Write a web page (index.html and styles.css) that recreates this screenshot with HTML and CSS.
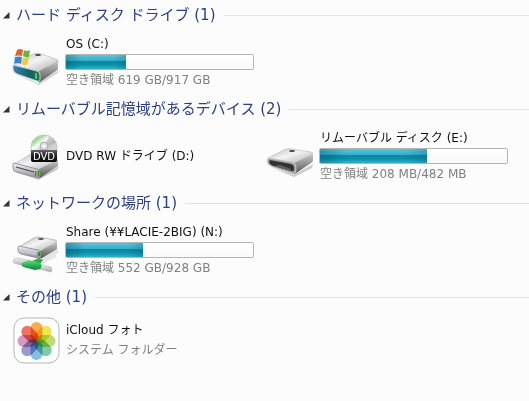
FILE: index.html
```html
<!DOCTYPE html>
<html lang="ja">
<head>
<meta charset="utf-8">
<title>コンピューター</title>
<link rel="stylesheet" href="styles.css">
</head>
<body>
<svg class="defs" width="0" height="0" aria-hidden="true">
  <defs>
    <linearGradient id="top" x1="0" y1="0" x2="1" y2="1">
      <stop offset="0" stop-color="#b9b9b9"/><stop offset=".45" stop-color="#f4f4f4"/><stop offset="1" stop-color="#aaa"/>
    </linearGradient>
    <linearGradient id="side" x1="0" y1="0" x2="0" y2="1">
      <stop offset="0" stop-color="#c9c9c9"/><stop offset="1" stop-color="#555"/>
    </linearGradient>
    <linearGradient id="front" x1="0" y1="0" x2="0" y2="1">
      <stop offset="0" stop-color="#f4f4f8"/><stop offset="1" stop-color="#8d8d95"/>
    </linearGradient>
    <linearGradient id="teal" x1="0" y1="0" x2="1" y2="0">
      <stop offset="0" stop-color="#3583b5"/><stop offset=".6" stop-color="#176168"/><stop offset="1" stop-color="#1a7950"/>
    </linearGradient>
    <linearGradient id="disc" x1="0" y1="0" x2="1" y2="1">
      <stop offset="0" stop-color="#c5c5c5"/><stop offset=".25" stop-color="#a7d8a0"/><stop offset=".42" stop-color="#fff"/><stop offset=".6" stop-color="#c9c9c9"/><stop offset="1" stop-color="#e7d9df"/>
    </linearGradient>
    <linearGradient id="label" x1="0" y1="0" x2="0" y2="1">
      <stop offset="0" stop-color="#666"/><stop offset=".45" stop-color="#222"/><stop offset="1" stop-color="#050505"/>
    </linearGradient>
    <linearGradient id="pipe" x1="0" y1="0" x2="0" y2="1">
      <stop offset="0" stop-color="#f4f6f6"/><stop offset="1" stop-color="#a2abaa"/>
    </linearGradient>
    <linearGradient id="green" x1="0" y1="0" x2="0" y2="1">
      <stop offset="0" stop-color="#63df82"/><stop offset="1" stop-color="#07862f"/>
    </linearGradient>
  </defs>
</svg>
<main>
  <section class="group">
    <h2><button type="button" aria-expanded="true"><svg class="arrow" viewBox="0 0 7 7"><path d="M6.5 0V6.5H0Z"/></svg>ハード ディスク ドライブ (1)</button></h2>
    <ul>
      <li>
        <svg class="icon" viewBox="0 0 48 48" aria-hidden="true">
          <path d="M3 36 26 45 47 32 46 35 27 47Z" fill="#aaa" opacity=".5"/>
          <path d="M2 27 19 17Q22 15 26 15L44 21Q47 22 46 25L27 34Z" fill="url(#top)" stroke="#aaa" stroke-width=".5"/>
          <path d="M27 33 46 23V30Q46 32 44 33L28 44Q26 45 26 42Z" fill="url(#side)"/>
          <path d="M1 27 25 33Q28 34 28 37V42Q28 44 25 43L5 36Q1 34 1 31Z" fill="url(#teal)" stroke="#c6d2d5"/>
          <path d="M24 35v6" stroke="#65e06c" stroke-width="1.5"/>
          <ellipse cx="26" cy="17" rx="3" ry="1" fill="#444"/>
          <path d="M5 12Q8 10 11 12L10 18Q7 17 3 18Z" fill="#da6538"/>
          <path d="M12 12Q15 14 18 12L17 19Q14 20 11 18Z" fill="#6fb03f"/>
          <path d="M3 19Q7 18 10 19L9 26Q6 24 2 26Z" fill="#3d84c5"/>
          <path d="M11 19Q14 21 17 20L15 27Q12 28 10 26Z" fill="#eccb48"/>
        </svg>
        <div class="info">
          <span class="name">OS (C:)</span>
          <progress max="100" value="32" aria-label="OS (C:) 使用量"></progress>
          <span class="detail">空き領域 619 GB/917 GB</span>
        </div>
      </li>
    </ul>
  </section>

  <section class="group">
    <h2><button type="button" aria-expanded="true"><svg class="arrow" viewBox="0 0 7 7"><path d="M6.5 0V6.5H0Z"/></svg>リムーバブル記憶域があるデバイス (2)</button></h2>
    <ul>
      <li>
        <svg class="icon" viewBox="0 0 48 48" aria-hidden="true">
          <path d="M4 40 25 47 47 34 45 38 26 48Z" fill="#999" opacity=".5"/>
          <path d="M2 32 19 22 46 28 27 38Z" fill="url(#top)" stroke="#aaa" stroke-width=".5"/>
          <path d="M27 37 46 28V34L28 46Q26 46 26 44Z" fill="url(#side)"/>
          <path d="M2 31 25 37Q28 38 28 41V44Q28 47 25 46L4 40Q1 39 1 36V33Q1 31 2 31Z" fill="url(#front)" stroke="#777" stroke-width=".7"/>
          <path d="M4 35 22 40" stroke="#45475e" stroke-width="1.2"/>
          <path d="M25 39v5" stroke="#4b7d2a" stroke-width="4"/>
          <path d="M25 39v5" stroke="#b8ee72" stroke-width="1"/>
          <path d="M19 21V15A13 12 0 0 1 45 15V21Z" fill="url(#disc)" stroke="#b5b5b5" stroke-width=".6"/>
          <path d="M32 15 37 4Q42 6 44 11Z" fill="#aaa" opacity=".5"/>
          <circle cx="32" cy="14" r="4" fill="#ddd" stroke="#aaa"/><circle cx="32" cy="14" r="1.5" fill="#fff"/>
          <path d="M19 18H45V28Q45 30 43 30H21Q19 30 19 28Z" fill="url(#label)"/>
          <text class="disc-label" x="32" y="28" text-anchor="middle">DVD</text>
        </svg>
        <div class="info">
          <span class="name">DVD RW ドライブ (D:)</span>
        </div>
      </li>
      <li>
        <svg class="icon" viewBox="0 0 48 48" aria-hidden="true">
          <path d="M4 35 28 43 47 32 46 36 28 45Z" fill="#999" opacity=".5"/>
          <path d="M2 26 20 17Q23 16 26 17L45 20Q48 21 46 23L29 32Z" fill="url(#top)" stroke="#aaa" stroke-width=".5"/>
          <path d="M28 31 47 22V28Q47 30 45 31L29 42Q27 43 27 40Z" fill="url(#side)"/>
          <path d="M2 26 26 30Q30 31 30 34V39Q30 42 27 42L7 35Q1 33 1 29Z" fill="#a6a6a6" stroke="#ccc" stroke-width=".7"/>
          <path d="M4 28 25 32Q28 33 28 35V38Q28 40 25 39L8 34Q4 33 3 30Z" fill="#333"/>
          <path d="M8 34 14 33 25 37V39Z" fill="#606060"/>
          <ellipse cx="26" cy="19" rx="3" ry="1" fill="#444"/>
        </svg>
        <div class="info">
          <span class="name">リムーバブル ディスク (E:)</span>
          <progress max="100" value="57" aria-label="リムーバブル ディスク (E:) 使用量"></progress>
          <span class="detail">空き領域 208 MB/482 MB</span>
        </div>
      </li>
    </ul>
  </section>

  <section class="group">
    <h2><button type="button" aria-expanded="true"><svg class="arrow" viewBox="0 0 7 7"><path d="M6.5 0V6.5H0Z"/></svg>ネットワークの場所 (1)</button></h2>
    <ul>
      <li>
        <svg class="icon" viewBox="0 0 48 48" aria-hidden="true">
          <path d="M24 33 44 23 47 26 30 39Z" fill="#ccc" opacity=".5"/>
          <path d="M7 21 22 12Q24 11 27 11L43 14Q46 15 44 17L28 26Z" fill="url(#top)" stroke="#999" stroke-width=".6"/>
          <path d="M28 25 45 16V23L30 32Q28 33 27 30Z" fill="url(#side)"/>
          <path d="M7 20 26 24Q29 25 29 27V30Q29 33 26 32L9 28Q6 27 6 24V22Q6 20 7 20Z" fill="url(#front)" stroke="#777" stroke-width=".7"/>
          <path d="M9 24 24 28" stroke="#cfc4dc" stroke-width="2"/>
          <path d="M27 26v4" stroke="#3b8737" stroke-width="2.5"/>
          <ellipse cx="29" cy="13" rx="3" ry="1" fill="#555"/>
          <path d="M30 35 44 30" stroke="#e3e7e6" stroke-width="3"/>
          <path d="M1 34 4 32 16 34 16 39 12 40 2 37Z" fill="url(#pipe)" stroke="#aaa" stroke-width=".5"/>
          <path d="M27 38 39 41Q41 43 39 46L27 43Z" fill="url(#pipe)" stroke="#aaa" stroke-width=".5"/>
          <path d="M20 35 27 32 31 34 28 38Z" fill="#2dad52"/>
          <path d="M10 37 17 34 28 37Q31 40 28 43L23 44 11 41Q9 39 10 37Z" fill="url(#green)"/>
        </svg>
        <div class="info">
          <span class="name">Share (¥¥LACIE-2BIG) (N:)</span>
          <progress max="100" value="41" aria-label="Share (N:) 使用量"></progress>
          <span class="detail">空き領域 552 GB/928 GB</span>
        </div>
      </li>
    </ul>
  </section>

  <section class="group other">
    <h2><button type="button" aria-expanded="true"><svg class="arrow" viewBox="0 0 7 7"><path d="M6.5 0V6.5H0Z"/></svg>その他 (1)</button></h2>
    <ul>
      <li>
        <svg class="icon" viewBox="0 0 48 48" aria-hidden="true">
          <rect x="2" y="2" width="45" height="45" rx="10" fill="#fff" stroke="#b5b5b5"/>
          <g class="petals">
            <rect x="18.5" y="6" width="12" height="19" rx="6" fill="#f9a337"/>
            <rect x="18.5" y="6" width="12" height="19" rx="6" fill="#efe43a" transform="rotate(45 24.5 25)"/>
            <rect x="18.5" y="6" width="12" height="19" rx="6" fill="#b8d761" transform="rotate(90 24.5 25)"/>
            <rect x="18.5" y="6" width="12" height="19" rx="6" fill="#6fc6a0" transform="rotate(135 24.5 25)"/>
            <rect x="18.5" y="6" width="12" height="19" rx="6" fill="#78b7e2" transform="rotate(180 24.5 25)"/>
            <rect x="18.5" y="6" width="12" height="19" rx="6" fill="#8e8fc9" transform="rotate(225 24.5 25)"/>
            <rect x="18.5" y="6" width="12" height="19" rx="6" fill="#d28fba" transform="rotate(270 24.5 25)"/>
            <rect x="18.5" y="6" width="12" height="19" rx="6" fill="#ef6552" transform="rotate(315 24.5 25)"/>
          </g>
        </svg>
        <div class="info">
          <span class="name">iCloud フォト</span>
          <span class="detail">システム フォルダー</span>
        </div>
      </li>
    </ul>
  </section>
</main>
</body>
</html>
```
FILE: styles.css
```css
* {
  box-sizing: border-box;
}

body {
  margin: 0;
  background: #fcfcfc;
  color: #111;
  font: 12px/18px "DejaVu Sans", "Noto Sans CJK JP", sans-serif;
}

.defs {
  position: absolute;
}

h2 {
  display: flex;
  align-items: center;
  gap: 8px;
  height: 30px;
  margin: 0;
  padding-left: 3px;
}

h2::after {
  content: "";
  flex: 1;
  height: 1px;
  background: #dfe1e5;
}

h2 button {
  display: flex;
  align-items: center;
  padding: 0;
  border: 0;
  background: none;
  color: #2c3f82;
  font: 15px/24px "DejaVu Sans", "Noto Sans CJK JP", sans-serif;
  white-space: pre;
}

.arrow {
  width: 7px;
  height: 7px;
  margin-right: 6px;
  fill: #333;
}

ul {
  display: grid;
  grid-template-columns: repeat(auto-fill, 254px);
  margin: 0;
  padding: 0 0 0 12px;
  list-style: none;
}

li {
  display: flex;
  align-items: center;
  gap: 5px;
  height: 64px;
}

.icon {
  flex: none;
  width: 48px;
  height: 48px;
}

.info {
  display: flex;
  flex: 1;
  flex-direction: column;
  gap: 1px;
  min-width: 0;
  padding-right: 12px;
}

.name,
.detail {
  padding-left: 1px;
  line-height: 18px;
  white-space: nowrap;
}

.detail {
  color: #808080;
}

progress {
  display: block;
  width: 189px;
  height: 16px;
  border: 1px solid #b4b4b4;
  border-radius: 2px;
  background: #fff;
  appearance: none;
  overflow: hidden;
}

progress::-webkit-progress-bar {
  background: linear-gradient(#fff, #fafafa);
}

progress::-webkit-progress-value {
  background:
    linear-gradient(90deg, rgb(0 70 100 / 35%), transparent 25%, transparent 80%, rgb(0 80 110 / 25%)),
    linear-gradient(#5cc5dd, #35afcb 40%, #0787a3 45%, #0b91ac 70%, #31b3ca);
}

.other li {
  height: 56px;
}

.other .info {
  gap: 2px;
}

.disc-label {
  fill: #fff;
  font: 10px "DejaVu Sans", sans-serif;
}

.petals rect {
  mix-blend-mode: multiply;
  opacity: .9;
}
```
